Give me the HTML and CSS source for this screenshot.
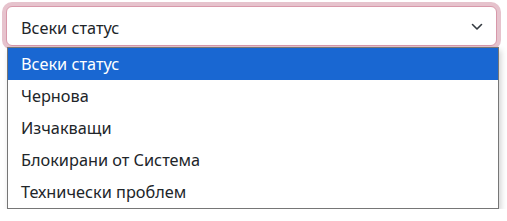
FILE: index.html
```html
<!DOCTYPE html>
<html lang="bg">
<head>
    <meta charset="UTF-8">
    <title>Статус</title>
    <link rel="stylesheet" href="styles.css">
</head>
<body>
<div class="filtro">
    <!-- select aperto -->
    <div class="select">
        <span>Всеки статус</span>
        <svg class="freccia" width="12" height="8" viewBox="0 0 12 8">
            <path d="M1.5 1.5 L6 6 L10.5 1.5" fill="none" stroke="#343a40" stroke-width="1.6" stroke-linecap="round" stroke-linejoin="round"/>
        </svg>
    </div>
    <ul class="opzioni">
        <li class="attiva">Всеки статус</li>
        <li>Чернова</li>
        <li>Изчакващи</li>
        <li>Блокирани от Система</li>
        <li>Технически проблем</li>
    </ul>
</div>
</body>
</html>
```

FILE: styles.css
```css
body {
    margin: 0;
    font-family: "Noto Sans", "Open Sans", sans-serif;
    background: white;
    color: #212529;
}

.filtro {
    padding: 6px 10px 0 6px;
}

.select {
    border: 1px solid #d898aa;
    border-radius: 6px;
    box-shadow: 0 0 0 4px #e6c3cd;
    display: flex;
    align-items: center;
    justify-content: space-between;
    padding: 3px 13px 0 14px;
    box-sizing: border-box;
    height: 40px;
    font-size: 16.3px;
    background: white;
}

.freccia {
    margin-top: -2px;
}

.opzioni {
    list-style: none;
    margin: 1px 0 0 1px;
    padding: 0;
    width: 490px;
    border: 1px solid #767676;
    background: white;
    box-shadow: 2px 3px 6px rgba(0, 0, 0, 0.18);
    font-size: 16.3px;
    position: relative;
}

.opzioni li {
    height: 32px;
    line-height: 33px;
    padding-left: 13px;
}

.opzioni li.attiva {
    background: #1967d2;
    color: white;
}
```
